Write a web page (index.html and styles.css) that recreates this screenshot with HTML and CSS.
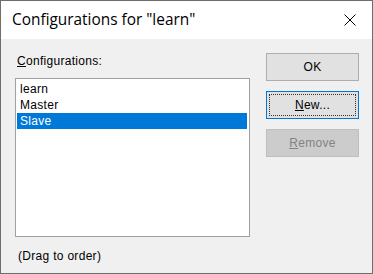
FILE: index.html
```html
<!DOCTYPE html>
<html>
<head>
<meta charset="utf-8">
<link rel="stylesheet" href="styles.css">
</head>
<body>
<div class="window">
  <div class="titlebar">
    <span class="title">Configurations for "learn"</span>
    <svg class="close" width="12" height="12" viewBox="0 0 12 12"><path d="M0.5 0.5 L11.5 11.5 M11.5 0.5 L0.5 11.5" stroke="#000" stroke-width="1" fill="none"/></svg>
  </div>
  <div class="content">
    <div class="left">
      <div class="label"><u>C</u>onfigurations:</div>
      <div class="listbox">
        <div class="item">learn</div>
        <div class="item">Master</div>
        <div class="item selected">Slave</div>
      </div>
      <div class="hint">(Drag to order)</div>
    </div>
    <div class="right">
      <div class="btn">OK</div>
      <div class="btn focused"><span class="focus"><u>N</u>ew...</span></div>
      <div class="btn disabled"><u>R</u>emove</div>
    </div>
  </div>
</div>
</body>
</html>
```
FILE: styles.css
```css
html, body {
  margin: 0;
  padding: 0;
}
body {
  width: 373px;
  height: 274px;
  overflow: hidden;
  font-family: "Liberation Sans", Arial, sans-serif;
  font-size: 12px;
  letter-spacing: 0.3px;
  color: #000;
}
.window {
  box-sizing: border-box;
  width: 373px;
  height: 274px;
  border: 1px solid #6e6e6e;
  background: #f0f0f0;
  display: flex;
  flex-direction: column;
}
.titlebar {
  height: 38px;
  background: #fff;
  display: flex;
  align-items: center;
  justify-content: space-between;
  padding: 0 16px 0 11px;
  flex-shrink: 0;
}
.title {
  font-family: "Open Sans", "Noto Sans", sans-serif;
  font-size: 15.4px;
  letter-spacing: 0;
  color: #000;
  margin-top: -1px;
}
.close {
  display: block;
}
.content {
  display: flex;
  padding: 15px 13px 0 14px;
  gap: 16px;
  flex: 1;
}
.left {
  width: 235px;
  display: flex;
  flex-direction: column;
}
.label {
  height: 24px;
  line-height: 14px;
  padding-left: 2px;
}
.label u, .btn u {
  text-decoration: underline;
  text-underline-offset: 1px;
}
.listbox {
  box-sizing: border-box;
  height: 159px;
  background: #fff;
  border: 1px solid #a0a0a0;
  padding: 2px 2px 0 1px;
}
.item {
  height: 16px;
  line-height: 17px;
  padding-left: 3px;
}
.item.selected {
  background: #0078d7;
  color: #fff;
}
.hint {
  margin-top: 12px;
  padding-left: 3px;
  line-height: 14px;
}
.right {
  width: 93px;
  display: flex;
  flex-direction: column;
  gap: 10px;
  margin-top: -1px;
}
.btn {
  box-sizing: border-box;
  height: 28px;
  background: #e1e1e1;
  border: 1px solid #adadad;
  display: flex;
  align-items: center;
  justify-content: center;
}
.btn.focused {
  border: 1px solid #0078d7;
  padding: 2px;
}
.btn.focused .focus {
  box-sizing: border-box;
  width: 100%;
  height: 100%;
  border: 1px dotted #333;
  display: flex;
  align-items: center;
  justify-content: center;
}
.btn.disabled {
  background: #cccccc;
  border-color: #bfbfbf;
  color: #838383;
}
```
